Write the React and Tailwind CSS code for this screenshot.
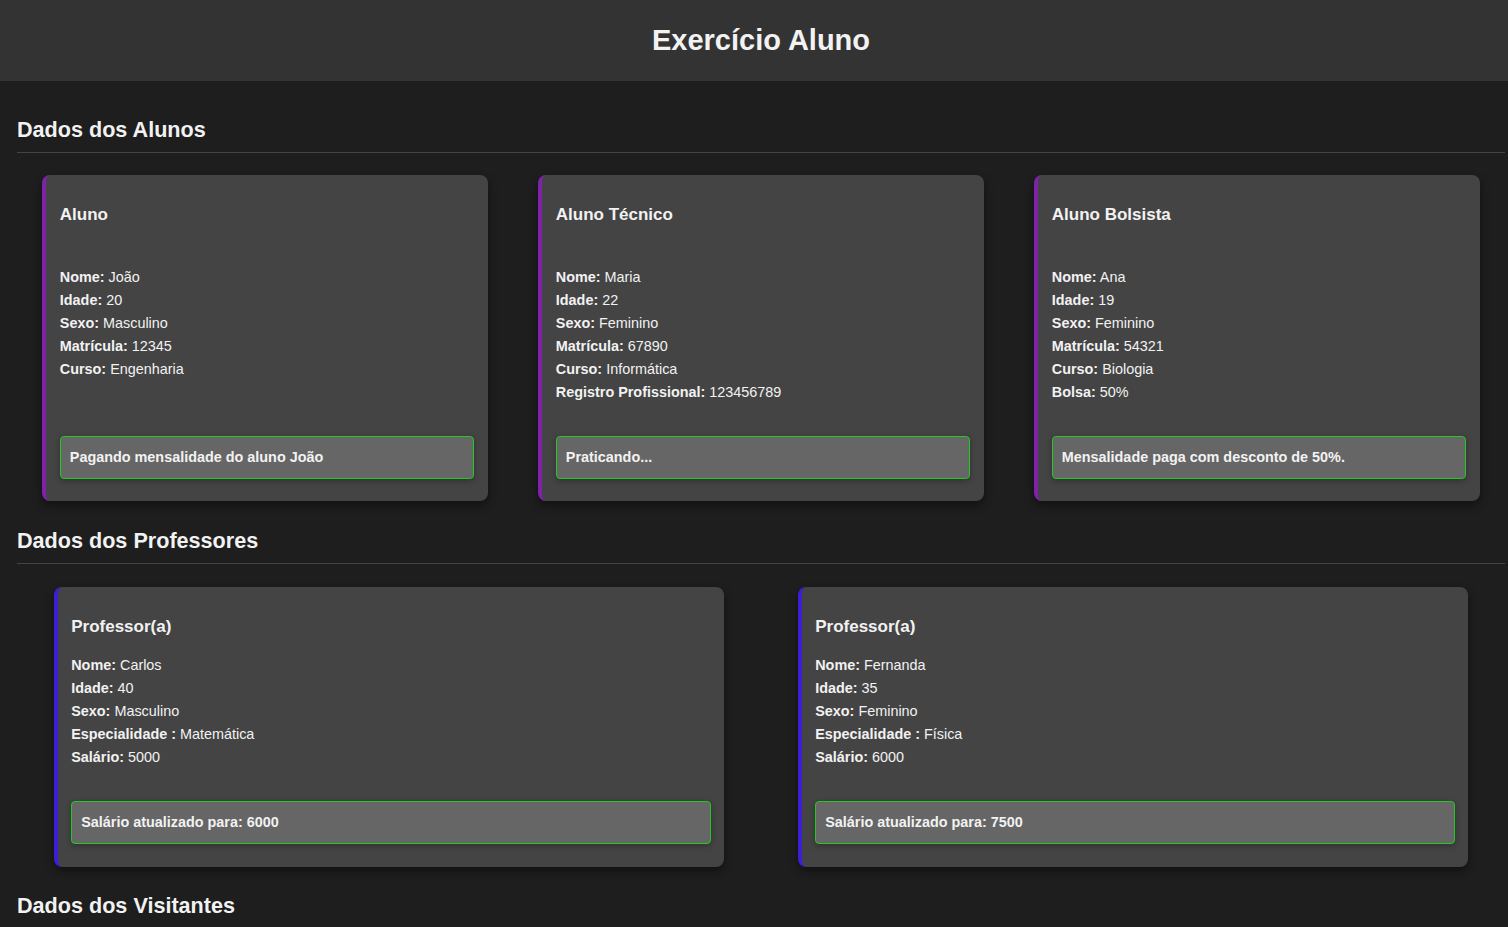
import React from "react";

const alunos = [
  {
    titulo: "Aluno",
    linhas: [
      ["Nome:", "João"],
      ["Idade:", "20"],
      ["Sexo:", "Masculino"],
      ["Matrícula:", "12345"],
      ["Curso:", "Engenharia"],
    ],
    acao: "Pagando mensalidade do aluno João",
  },
  {
    titulo: "Aluno Técnico",
    linhas: [
      ["Nome:", "Maria"],
      ["Idade:", "22"],
      ["Sexo:", "Feminino"],
      ["Matrícula:", "67890"],
      ["Curso:", "Informática"],
      ["Registro Profissional:", "123456789"],
    ],
    acao: "Praticando...",
  },
  {
    titulo: "Aluno Bolsista",
    linhas: [
      ["Nome:", "Ana"],
      ["Idade:", "19"],
      ["Sexo:", "Feminino"],
      ["Matrícula:", "54321"],
      ["Curso:", "Biologia"],
      ["Bolsa:", "50%"],
    ],
    acao: "Mensalidade paga com desconto de 50%.",
  },
];

const professores = [
  {
    titulo: "Professor(a)",
    linhas: [
      ["Nome:", "Carlos"],
      ["Idade:", "40"],
      ["Sexo:", "Masculino"],
      ["Especialidade :", "Matemática"],
      ["Salário:", "5000"],
    ],
    acao: "Salário atualizado para: 6000",
  },
  {
    titulo: "Professor(a)",
    linhas: [
      ["Nome:", "Fernanda"],
      ["Idade:", "35"],
      ["Sexo:", "Feminino"],
      ["Especialidade :", "Física"],
      ["Salário:", "6000"],
    ],
    acao: "Salário atualizado para: 7500",
  },
];

function Info({ linhas }) {
  return (
    <div className="text-[14.4px] leading-[23px]">
      {linhas.map(([k, v], i) => (
        <p key={i}>
          <strong className="font-bold">{k}</strong> {v}
        </p>
      ))}
    </div>
  );
}

function Acao({ texto }) {
  return (
    <div className="mt-auto h-[43px] flex items-center px-[9px] bg-[#666666] border border-[#22c922] rounded-[4px] shadow-[0_2px_6px_rgba(0,0,0,0.3)] text-[14.4px] font-bold">
      {texto}
    </div>
  );
}

function CardAluno({ d }) {
  return (
    <div className="w-[30%] flex flex-col bg-[#444444] rounded-[8px] border-l-4 border-[#7e22a8] pl-[14px] pr-[14px] pt-[29px] pb-[22px] shadow-[0_4px_10px_rgba(0,0,0,0.45)]">
      <h3 className="text-[17px] font-bold leading-[22px]">{d.titulo}</h3>
      <div className="h-[40px]" />
      <Info linhas={d.linhas} />
      <div className="h-[32px]" />
      <Acao texto={d.acao} />
    </div>
  );
}

function CardProf({ d }) {
  return (
    <div className="w-[45%] flex flex-col bg-[#444444] rounded-[8px] border-l-4 border-[#3b1fd4] pl-[13px] pr-[13px] pt-[29px] pb-[23px] shadow-[0_4px_10px_rgba(0,0,0,0.45)]">
      <h3 className="text-[17px] font-bold leading-[22px]">{d.titulo}</h3>
      <div className="h-[16px]" />
      <Info linhas={d.linhas} />
      <div className="h-[32px]" />
      <Acao texto={d.acao} />
    </div>
  );
}

function Secao({ titulo, children }) {
  return (
    <section>
      <h2 className="text-[21.6px] font-bold leading-[28px] pt-[1px] pb-[8px] border-b border-[#444444]">
        {titulo}
      </h2>
      {children}
    </section>
  );
}

export default function App() {
  return (
    <div
      className="min-h-screen bg-[#1e1e1e] text-[#f2f2f2]"
      style={{ fontFamily: '"Liberation Sans", Arial, sans-serif' }}
    >
      <header className="h-[81px] bg-[#333333] flex items-center justify-center pl-[14px]">
        <h1 className="text-[29px] font-bold">Exercício Aluno</h1>
      </header>
      <main className="pl-[17px] pr-[3px] pt-[34px]">
        <Secao titulo="Dados dos Alunos">
          <div className="flex justify-around items-stretch pt-[22px] pb-[25px]">
            {alunos.map((d, i) => (
              <CardAluno key={i} d={d} />
            ))}
          </div>
        </Secao>
        <Secao titulo="Dados dos Professores">
          <div className="flex justify-around items-stretch pt-[23px] pb-[24px]">
            {professores.map((d, i) => (
              <CardProf key={i} d={d} />
            ))}
          </div>
        </Secao>
        <Secao titulo="Dados dos Visitantes">
          <div className="h-[200px]" />
        </Secao>
      </main>
    </div>
  );
}
